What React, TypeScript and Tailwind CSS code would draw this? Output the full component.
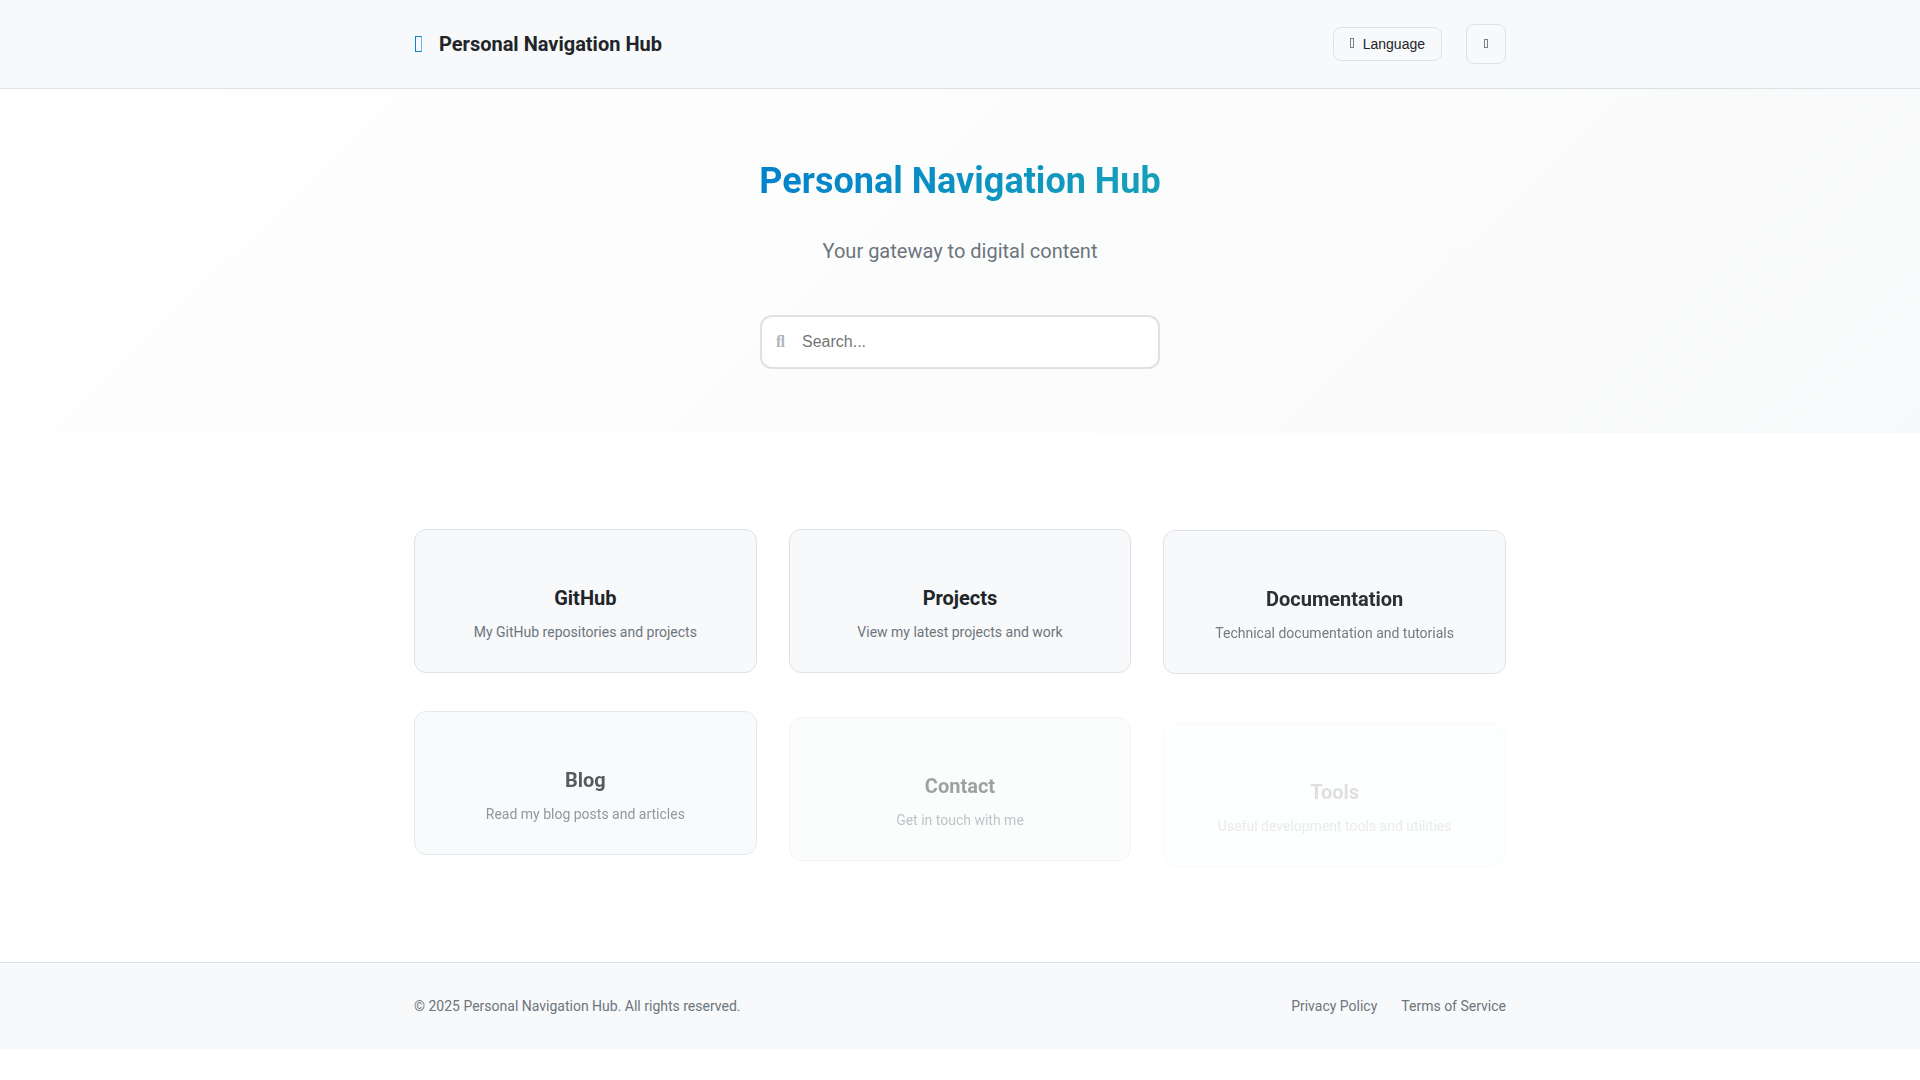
import React, { useState } from 'react';

interface NavItem {
  title: string;
  description: string;
  // entrance animation state of the card
  motion: string;
}

const ITEMS: NavItem[] = [
  { title: 'GitHub', description: 'My GitHub repositories and projects', motion: 'opacity-100' },
  { title: 'Projects', description: 'View my latest projects and work', motion: 'opacity-100' },
  {
    title: 'Documentation',
    description: 'Technical documentation and tutorials',
    motion: 'opacity-95 translate-y-px',
  },
  {
    title: 'Blog',
    description: 'Read my blog posts and articles',
    motion: 'opacity-75 translate-y-[6px]',
  },
  {
    title: 'Contact',
    description: 'Get in touch with me',
    motion: 'opacity-43 translate-y-[12px]',
  },
  {
    title: 'Tools',
    description: 'Useful development tools and utilities',
    motion: 'opacity-14 translate-y-[18px]',
  },
];

// empty outlined box, stands for an icon
const BoxIcon: React.FC<{ className: string }> = ({ className }) => (
  <span aria-hidden="true" className={`block border ${className}`} />
);

const Header: React.FC = () => (
  <header className="border-b border-[#dee2e6] bg-[#f8f9fa]">
    <div className="mx-auto flex h-[88px] max-w-[1140px] items-center justify-between px-6">
      <div className="flex items-center gap-4">
        <BoxIcon className="mx-px h-4 w-[7px] border-[#0a84d6] border-r-[#6bb3e6]" />
        <span className="text-xl font-bold">Personal Navigation Hub</span>
      </div>
      <div className="flex items-center gap-6">
        <button className="flex h-[34px] items-center gap-2 rounded-lg border border-[#dee2e6] px-4 font-['Liberation_Sans',Arial,sans-serif] text-sm">
          <BoxIcon className="mr-px mb-0.5 h-[10px] w-1 border-[#7d8185]" />
          Language
        </button>
        <button
          aria-label="Toggle theme"
          className="flex size-10 items-center justify-center rounded-lg border border-[#dee2e6]"
        >
          <BoxIcon className="mb-px h-[9px] w-1 border-[#7d8185]" />
        </button>
      </div>
    </div>
  </header>
);

const Hero: React.FC = () => {
  const [query, setQuery] = useState('');

  return (
    <section className="flex flex-col items-center bg-[linear-gradient(135deg,#ffffff_0%,#f8f9fa_100%)] px-6 py-16">
      <h1 className="bg-[linear-gradient(135deg,#0080cc,#17a2b8)] bg-clip-text text-4xl leading-[56px] font-bold text-transparent">
        Personal Navigation Hub
      </h1>
      <p className="mt-[26px] text-xl leading-8 text-[#6c757d]">Your gateway to digital content</p>
      <div className="relative mt-12 w-full max-w-[400px]">
        <span
          aria-hidden="true"
          className="absolute inset-y-0 left-4 flex items-center font-['Liberation_Serif',serif] text-base font-bold text-[#adb5bd]"
        >
          {'\ufb02'}
        </span>
        <input
          type="text"
          aria-label="Search"
          placeholder="Search..."
          value={query}
          onChange={(e) => setQuery(e.target.value)}
          className="h-[54px] w-full rounded-xl border-2 border-[#dee2e6] bg-white pr-4 pl-10 font-['Liberation_Sans',Arial,sans-serif] text-base placeholder:text-[#757575]"
        />
      </div>
    </section>
  );
};

const NavCard: React.FC<{ item: NavItem }> = ({ item }) => (
  <a
    href="#"
    className={`rounded-xl border border-[#dee2e6] bg-[#f8f9fa] px-8 pt-[52px] pb-[30px] text-center ${item.motion}`}
  >
    <h3 className="mb-2 text-xl leading-8 font-bold">{item.title}</h3>
    <p className="text-sm leading-5 text-[#6c757d]">{item.description}</p>
  </a>
);

const Footer: React.FC = () => (
  <footer className="border-t border-[#dee2e6] bg-[#f8f9fa] py-8 text-sm text-[#6c757d]">
    <div className="mx-auto flex max-w-[1140px] items-center justify-between px-6 leading-[22px]">
      <p>© 2025 Personal Navigation Hub. All rights reserved.</p>
      <nav className="flex gap-6">
        <a href="#">Privacy Policy</a>
        <a href="#">Terms of Service</a>
      </nav>
    </div>
  </footer>
);

export default function App() {
  return (
    <div className="bg-white font-[Roboto,sans-serif] text-[#212529]">
      <Header />
      <Hero />
      <main className="mx-auto grid max-w-[1140px] grid-cols-3 gap-8 px-6 pt-24 pb-[113px]">
        {ITEMS.map((item) => (
          <NavCard key={item.title} item={item} />
        ))}
      </main>
      <Footer />
    </div>
  );
}
